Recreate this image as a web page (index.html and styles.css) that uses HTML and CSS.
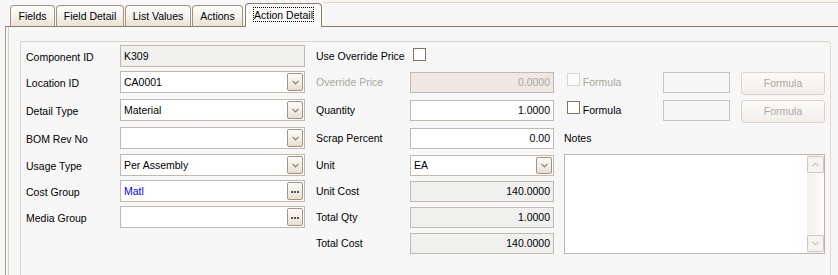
FILE: index.html
```html
<!DOCTYPE html>
<html lang="en">
<head>
    <meta charset="UTF-8">
    <title>Action Detail</title>
    <link rel="stylesheet" href="styles.css">
</head>
<body>
    <div class="tabs">
        <div class="tab tab-fields">Fields</div>
        <div class="tab tab-detail">Field Detail</div>
        <div class="tab tab-list">List Values</div>
        <div class="tab tab-actions">Actions</div>
        <div class="tab tab-active"><span class="focus">Action Detail</span></div>
        <div class="tab-fill"></div>
    </div>

    <div class="panel">
        <div class="group">
            <div class="form">
                <!-- row 1 -->
                <div class="label lbl-tall">Component ID</div>
                <div class="cell"><div class="field field-tall readonly">K309</div></div>
                <div class="label">Use Override Price</div>
                <div class="cell cell-check"><span class="check"></span></div>
                <div></div>

                <!-- row 2 -->
                <div class="label lbl-tall">Location ID</div>
                <div class="cell">
                    <div class="field field-tall combo">
                        <span class="value">CA0001</span>
                        <span class="btn"><svg width="7" height="5" viewBox="0 0 7 5"><polyline points="0.5,0.8 3.5,3.8 6.5,0.8" fill="none" stroke="#8a7b6c" stroke-width="1.2"/></svg></span>
                    </div>
                </div>
                <div class="label disabled">Override Price</div>
                <div class="cell"><div class="field num locked">0.0000</div></div>
                <div class="formula-row">
                    <span class="check check-off"></span>
                    <span class="formula-lbl disabled">Formula</span>
                    <span class="formula-box"></span>
                    <span class="formula-btn">Formula</span>
                </div>

                <!-- row 3 -->
                <div class="label lbl-tall">Detail Type</div>
                <div class="cell">
                    <div class="field field-tall combo">
                        <span class="value">Material</span>
                        <span class="btn"><svg width="7" height="5" viewBox="0 0 7 5"><polyline points="0.5,0.8 3.5,3.8 6.5,0.8" fill="none" stroke="#8a7b6c" stroke-width="1.2"/></svg></span>
                    </div>
                </div>
                <div class="label">Quantity</div>
                <div class="cell"><div class="field num">1.0000</div></div>
                <div class="formula-row">
                    <span class="check"></span>
                    <span class="formula-lbl">Formula</span>
                    <span class="formula-box"></span>
                    <span class="formula-btn">Formula</span>
                </div>

                <!-- row 4 -->
                <div class="label lbl-tall">BOM Rev No</div>
                <div class="cell">
                    <div class="field field-tall combo">
                        <span class="value"></span>
                        <span class="btn"><svg width="7" height="5" viewBox="0 0 7 5"><polyline points="0.5,0.8 3.5,3.8 6.5,0.8" fill="none" stroke="#8a7b6c" stroke-width="1.2"/></svg></span>
                    </div>
                </div>
                <div class="label">Scrap Percent</div>
                <div class="cell"><div class="field num">0.00</div></div>
                <div class="label notes-lbl">Notes</div>

                <!-- row 5 -->
                <div class="label lbl-tall">Usage Type</div>
                <div class="cell">
                    <div class="field field-tall combo">
                        <span class="value">Per Assembly</span>
                        <span class="btn"><svg width="7" height="5" viewBox="0 0 7 5"><polyline points="0.5,0.8 3.5,3.8 6.5,0.8" fill="none" stroke="#8a7b6c" stroke-width="1.2"/></svg></span>
                    </div>
                </div>
                <div class="label">Unit</div>
                <div class="cell">
                    <div class="field combo">
                        <span class="value">EA</span>
                        <span class="btn"><svg width="7" height="5" viewBox="0 0 7 5"><polyline points="0.5,0.8 3.5,3.8 6.5,0.8" fill="none" stroke="#8a7b6c" stroke-width="1.2"/></svg></span>
                    </div>
                </div>
                <div class="notes">
                    <div class="notes-text"></div>
                    <div class="scroll">
                        <span class="sbtn"><svg width="7" height="5" viewBox="0 0 7 5"><polyline points="0.5,4.2 3.5,1.2 6.5,4.2" fill="none" stroke="#c4bcb4" stroke-width="1.1"/></svg></span>
                        <span class="track"></span>
                        <span class="sbtn"><svg width="7" height="5" viewBox="0 0 7 5"><polyline points="0.5,0.8 3.5,3.8 6.5,0.8" fill="none" stroke="#c4bcb4" stroke-width="1.1"/></svg></span>
                    </div>
                </div>

                <!-- row 6 -->
                <div class="label lbl-tall">Cost Group</div>
                <div class="cell">
                    <div class="field field-tall combo">
                        <span class="value link">Matl</span>
                        <span class="btn dots"><i></i><i></i><i></i></span>
                    </div>
                </div>
                <div class="label">Unit Cost</div>
                <div class="cell"><div class="field num readonly">140.0000</div></div>

                <!-- row 7 -->
                <div class="label lbl-tall">Media Group</div>
                <div class="cell">
                    <div class="field field-tall combo">
                        <span class="value"></span>
                        <span class="btn dots"><i></i><i></i><i></i></span>
                    </div>
                </div>
                <div class="label">Total Qty</div>
                <div class="cell"><div class="field num readonly">1.0000</div></div>

                <!-- row 8 -->
                <div></div>
                <div></div>
                <div class="label">Total Cost</div>
                <div class="cell"><div class="field num readonly">140.0000</div></div>
            </div>
        </div>
    </div>
</body>
</html>
```

FILE: styles.css
```css
body {
    margin: 0;
    height: 275px;
    background-color: #f7f7f7;
    font-family: 'Liberation Sans', Arial, sans-serif;
    font-size: 10.5px;
    color: #000;
    overflow: hidden;
}
.tabs {
    display: flex;
    align-items: flex-end;
    height: 26px;
    padding-left: 10px;
    position: relative;
    z-index: 1;
}
.tab {
    box-sizing: border-box;
    height: 21px;
    margin-right: 1px;
    border: 1px solid #a39280;
    border-bottom: none;
    border-radius: 4px 4px 0 0;
    background: linear-gradient(#fdfdfc, #f4f1ea 55%, #e9e2d4);
    text-align: center;
    line-height: 20px;
}
.tab-fields { width: 45px; }
.tab-detail { width: 68px; }
.tab-list { width: 66px; }
.tab-actions { width: 51px; }
.tab-active {
    width: 77px;
    height: 24px;
    margin-left: 1px;
    margin-bottom: -1px;
    border-color: #917d6a;
    background: #fbfbfa;
    line-height: 22px;
}
.focus {
    outline: 1px dotted #000;
    padding: 1px 0 0;
}
.tab-fill {
    flex: 1;
    align-self: stretch;
    margin-top: 2px;
    border-top: 1px solid #e6d8c0;
}
.panel {
    box-sizing: border-box;
    margin-left: 5px;
    height: 249px;
    overflow: hidden;
    border-top: 1px solid #8f7a67;
    border-left: 1px solid #a8998a;
    box-shadow: inset 2px 0 0 #f7f7f7, inset 3px 0 0 #d9d2c7;
    padding: 14px 0 0 14px;
}
.group {
    box-sizing: border-box;
    width: 811px;
    height: 250px;
    border: 1px solid #d8d2c8;
    border-right-color: #e6dac6;
    border-radius: 3px;
    padding: 4px 0 0 5px;
}
.form {
    display: grid;
    grid-template-columns: 94px 196px 94px 154px 261px;
    grid-template-rows: 26px 28px 28px 27px 26px 26px 26px 22px;
}
.label {
    line-height: 21px;
    white-space: nowrap;
}
.lbl-tall {
    line-height: 22px;
}
.disabled {
    color: #a8a59c;
}
.field {
    box-sizing: border-box;
    height: 21px;
    border: 1px solid #c2b8ae;
    background-color: #fff;
    padding: 0 3px;
    line-height: 19px;
    white-space: nowrap;
}
.cell > .field {
    width: 144px;
}
.cell > .field-tall {
    width: 185px;
    height: 22px;
    margin-top: -1px;
    line-height: 20px;
}
.readonly {
    background-color: #f0f0ef;
}
.locked {
    background-color: #ede9e2;
    color: #aaa79f;
}
.num {
    text-align: right;
}
.combo {
    display: flex;
    align-items: center;
    padding-right: 1px;
}
.value {
    flex: 1;
}
.link {
    color: #0000ff;
}
.btn {
    box-sizing: border-box;
    width: 16px;
    height: 17px;
    border: 1px solid #a6927f;
    border-radius: 2px;
    background: linear-gradient(#fcfbf8, #f1ece3 60%, #e6ddcf);
    display: flex;
    align-items: center;
    justify-content: center;
}
.field-tall .btn {
    height: 18px;
}
.dots {
    gap: 1px;
    padding-top: 1px;
}
.dots i {
    width: 2px;
    height: 2px;
    background-color: #5b4e42;
}
.cell-check {
    padding: 2px 0 0 3px;
}
.check {
    box-sizing: border-box;
    display: block;
    width: 13px;
    height: 13px;
    border: 1px solid #857462;
    background-color: #fff;
}
.check-off {
    border-color: #dcd3ca;
    background-color: #fcfafa;
}
.formula-row {
    display: flex;
    align-items: flex-start;
    padding-left: 3px;
}
.formula-row .check {
    margin-top: 1px;
}
.formula-lbl {
    width: 81px;
    padding-left: 3px;
    line-height: 20px;
}
.formula-box {
    box-sizing: border-box;
    width: 68px;
    height: 21px;
    border: 1px solid #cbc3bb;
}
.formula-btn {
    box-sizing: border-box;
    width: 85px;
    height: 23px;
    margin-left: 11px;
    border: 1px solid #dbd3cb;
    border-radius: 3px;
    background: linear-gradient(#fbfaf8, #f2efea);
    color: #aba89f;
    text-align: center;
    line-height: 21px;
}
.notes-lbl {
    line-height: 21px;
}
.notes {
    grid-row: span 4;
    box-sizing: border-box;
    height: 100px;
    margin-top: -1px;
    border: 1px solid #bfb5ac;
    background-color: #fff;
    display: flex;
}
.notes-text {
    flex: 1;
}
.scroll {
    width: 17px;
    padding: 1px 0;
    display: flex;
    flex-direction: column;
    background: linear-gradient(to right, #f4f0ea, #fdfcfa);
}
.sbtn {
    box-sizing: border-box;
    width: 17px;
    height: 17px;
    border: 1px solid #d0c8c0;
    border-radius: 2px;
    background-color: #f6f3ee;
    display: flex;
    align-items: center;
    justify-content: center;
}
.track {
    flex: 1;
}
```
